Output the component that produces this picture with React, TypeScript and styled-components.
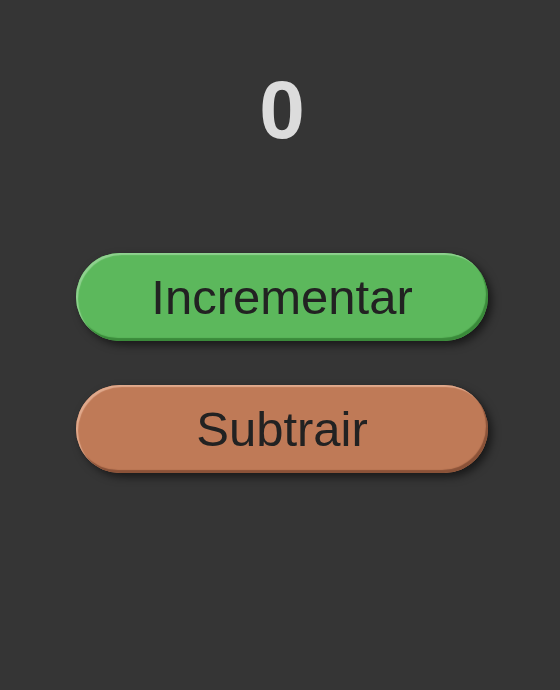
import React, { useState } from "react";
import styled, { createGlobalStyle } from "styled-components";

const Global = createGlobalStyle`
  html, body {
    margin: 0;
    padding: 0;
    background: #353535;
  }
  body {
    font-family: "Liberation Sans", Arial, sans-serif;
  }
`;

const Page = styled.main`
  min-height: 690px;
  display: flex;
  flex-direction: column;
  align-items: center;
  padding: 69px 0 0 4px;
  box-sizing: border-box;
`;

const Count = styled.h1`
  margin: 0;
  font-size: 82px;
  line-height: 1;
  font-weight: 700;
  color: #dcdcdc;
`;

const Actions = styled.div`
  display: flex;
  flex-direction: column;
  gap: 44px;
  margin-top: 102px;
`;

const PillButton = styled.button<{ $tone: string; $light: string; $dark: string }>`
  width: 412px;
  height: 88px;
  border-radius: 44px;
  border: none;
  background: ${(p) => p.$tone};
  color: #222;
  font-family: "Liberation Sans", Arial, sans-serif;
  font-size: 49px;
  line-height: 1;
  box-shadow:
    inset 2px 2px 1px ${(p) => p.$light},
    inset -2px -3px 1px ${(p) => p.$dark},
    4px 4px 8px rgba(0, 0, 0, 0.55);
  cursor: pointer;
  padding: 0;
`;

export default function App() {
  const [count, setCount] = useState(0);
  return (
    <>
      <Global />
      <Page>
        <Count>{count}</Count>
        <Actions>
          <PillButton
            $tone="#5cb85c"
            $light="#8fd18f"
            $dark="#3a8a3a"
            onClick={() => setCount((c) => c + 1)}
          >
            Incrementar
          </PillButton>
          <PillButton
            $tone="#bf7a57"
            $light="#e0a98c"
            $dark="#8a5238"
            onClick={() => setCount((c) => c - 1)}
          >
            Subtrair
          </PillButton>
        </Actions>
      </Page>
    </>
  );
}
